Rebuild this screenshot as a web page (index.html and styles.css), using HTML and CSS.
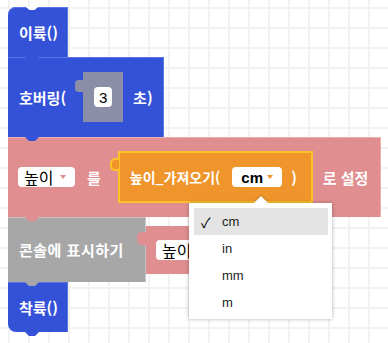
FILE: index.html
```html
<!DOCTYPE html>
<html lang="ko">
	<head>
		<meta charset="UTF-8" />
		<title>블록 작업 공간</title>
		<link rel="stylesheet" href="styles.css">
	</head>
	<body>
		<div class="workspace">
			<div class="stack">
				<div class="block block_blue block_hat">이륙()</div>
				<div class="block block_blue block_hover">
					<span>호버링(</span>
					<div class="slot">
						<span class="num">3</span>
					</div>
					<span>초)</span>
				</div>
				<div class="block block_red block_set">
					<span class="field field_red">높이 <i class="arrow"></i></span>
					<span class="word">를</span>
					<div class="reporter reporter_orange">
						<span class="label">높이_가져오기(</span>
						<span class="field field_orange">cm <i class="arrow"></i></span>
						<span class="paren">)</span>
					</div>
					<span class="word_end">로 설정</span>
				</div>
				<div class="row">
					<div class="block block_gray block_print">콘솔에 표시하기</div>
					<div class="reporter reporter_red">
						<span class="field field_red">높이 <i class="arrow"></i></span>
					</div>
				</div>
				<div class="block block_blue block_land">착륙()</div>
			</div>

			<ul class="menu">
				<li class="menu-item menu-item_active"><span class="check">✓</span>cm</li>
				<li class="menu-item">in</li>
				<li class="menu-item">mm</li>
				<li class="menu-item">m</li>
			</ul>
		</div>
	</body>
</html>
```

FILE: styles.css
```css
html {
	box-sizing: border-box;
}

*,
*::after,
*::before {
	box-sizing: inherit;
}

body {
	margin: 0;
	font-family: "Noto Sans CJK KR", "Noto Sans", sans-serif;
	background-color: #ffffff;
	background-image:
		linear-gradient(#f2f2f2 2px, transparent 2px),
		linear-gradient(90deg, #f2f2f2 2px, transparent 2px);
	background-size: 20px 20px;
	background-position: 8px 7px;
	-webkit-font-smoothing: antialiased;
}

.workspace {
	position: relative;
	width: 388px;
	height: 343px;
	overflow: hidden;
	padding: 7px 0 0 8px;
}

.stack {
	display: flex;
	flex-direction: column;
	align-items: flex-start;
}

.block {
	position: relative;
	display: flex;
	align-items: center;
	flex-shrink: 0;
	padding-left: 11px;
	color: #ffffff;
	font-size: 15px;
	font-weight: 700;
	white-space: nowrap;
}

.block > *,
.reporter > * {
	flex-shrink: 0;
}

/* tab under each block, sticks into the next one */
.block::after {
	content: "";
	position: absolute;
	z-index: 3;
	left: 17px;
	top: 100%;
	width: 14px;
	height: 4px;
	background-color: inherit;
	clip-path: polygon(0 0, 100% 0, 72% 100%, 28% 100%);
}

.block_blue {
	background-color: #3452d8;
	box-shadow: inset 0 1px 0 #5b74e2, inset -1px 0 0 #5b74e2;
}

.block_red {
	background-color: #e08e8f;
	box-shadow: inset 0 1px 0 #eab0b0, inset -1px 0 0 #eab0b0;
}

.block_gray {
	background-color: #a7a7a7;
	box-shadow: inset 0 1px 0 #c4c4c4, inset -1px 0 0 #c4c4c4;
}

.block_hat {
	width: 60px;
	height: 50px;
	border-top-left-radius: 8px;
}

.block_hat::before {
	content: "";
	position: absolute;
	left: 18px;
	top: 0;
	width: 12px;
	height: 3px;
	background-color: #ffffff;
	clip-path: polygon(0 0, 100% 0, 72% 100%, 28% 100%);
}

.block_hover {
	width: 156px;
	height: 80px;
}

.slot {
	position: relative;
	display: flex;
	align-items: center;
	width: 40px;
	height: 50px;
	margin: 0 10px 0 17px;
	padding-left: 11px;
	background-color: #8a8fa7;
}

.slot::before {
	content: "";
	position: absolute;
	left: -8px;
	top: 8px;
	width: 8px;
	height: 12px;
	border-radius: 4px 0 0 4px;
	background-color: inherit;
}

.num {
	display: flex;
	align-items: center;
	justify-content: center;
	width: 18px;
	height: 20px;
	border-radius: 4px;
	background-color: #ffffff;
	color: #000000;
	font-family: "Liberation Sans", sans-serif;
	font-size: 15px;
	font-weight: 400;
}

.block_set {
	width: 373px;
	height: 80px;
	padding-left: 10px;
}

.field {
	display: flex;
	align-items: center;
	height: 20px;
	border-radius: 4px;
	background-color: #ffffff;
	color: #000000;
	font-size: 16px;
	font-weight: 400;
}

.field_red {
	flex: 0 0 57px;
	width: 57px;
	padding-left: 6px;
}

.field_orange {
	flex: 0 0 50px;
	width: 50px;
	margin-left: 12px;
	padding-left: 9px;
	font-family: "Liberation Sans", sans-serif;
	font-weight: 700;
	font-size: 15px;
}

.arrow {
	display: inline-block;
	width: 0;
	height: 0;
	margin-left: auto;
	margin-right: 9px;
	border-left: 3.5px solid transparent;
	border-right: 3.5px solid transparent;
	border-top: 4px solid #e08e8f;
}

.field_orange .arrow {
	border-top-color: #f0952b;
}

.word {
	margin-left: 12px;
}

.word_end {
	margin-left: 10px;
}

.reporter {
	position: relative;
	display: flex;
	align-items: center;
	flex-shrink: 0;
}

.reporter::before {
	content: "";
	position: absolute;
	left: -9px;
	top: 6px;
	width: 9px;
	height: 13px;
	border-radius: 5px 0 0 5px;
	background-color: inherit;
}

.reporter_orange {
	width: 195px;
	height: 52px;
	margin-left: 17px;
	padding-left: 10px;
	background-color: #f0952b;
	border: 2px solid #fcc228;
}

.reporter_orange::before {
	top: 5px;
	left: -10px;
	border: 2px solid #fcc228;
	border-right: none;
}

.label {
	font-size: 14px;
}

.paren {
	margin-left: 9px;
}

.row {
	display: flex;
	align-items: center;
	height: 65px;
}

.block_print {
	width: 138px;
	height: 65px;
	padding-left: 11px;
	letter-spacing: 0.5px;
}

.reporter_red {
	width: 80px;
	height: 48px;
	padding-left: 10px;
	background-color: #e08e8f;
}

.reporter_red::before {
	top: 6px;
}

.block_land {
	width: 60px;
	height: 50px;
	border-bottom-left-radius: 8px;
}

.menu {
	position: absolute;
	left: 189px;
	top: 203px;
	width: 143px;
	margin: 0;
	padding: 5px 4px 3px 5px;
	list-style: none;
	background-color: #ffffff;
	box-shadow: 0 0 4px rgb(0 0 0 / 30%);
	font-family: "Liberation Sans", sans-serif;
	font-size: 13px;
	color: #222222;
}

.menu::before {
	content: "";
	position: absolute;
	left: 67px;
	top: -5px;
	width: 10px;
	height: 10px;
	background-color: #ffffff;
	transform: rotate(45deg);
	box-shadow: -1px -1px 2px rgb(0 0 0 / 12%);
}

.menu-item {
	position: relative;
	display: flex;
	align-items: center;
	height: 27px;
	padding-left: 28px;
}

.menu-item_active {
	background-color: #e4e4e4;
}

.check {
	position: absolute;
	left: 7px;
	font-size: 14px;
	color: #000000;
}
```
